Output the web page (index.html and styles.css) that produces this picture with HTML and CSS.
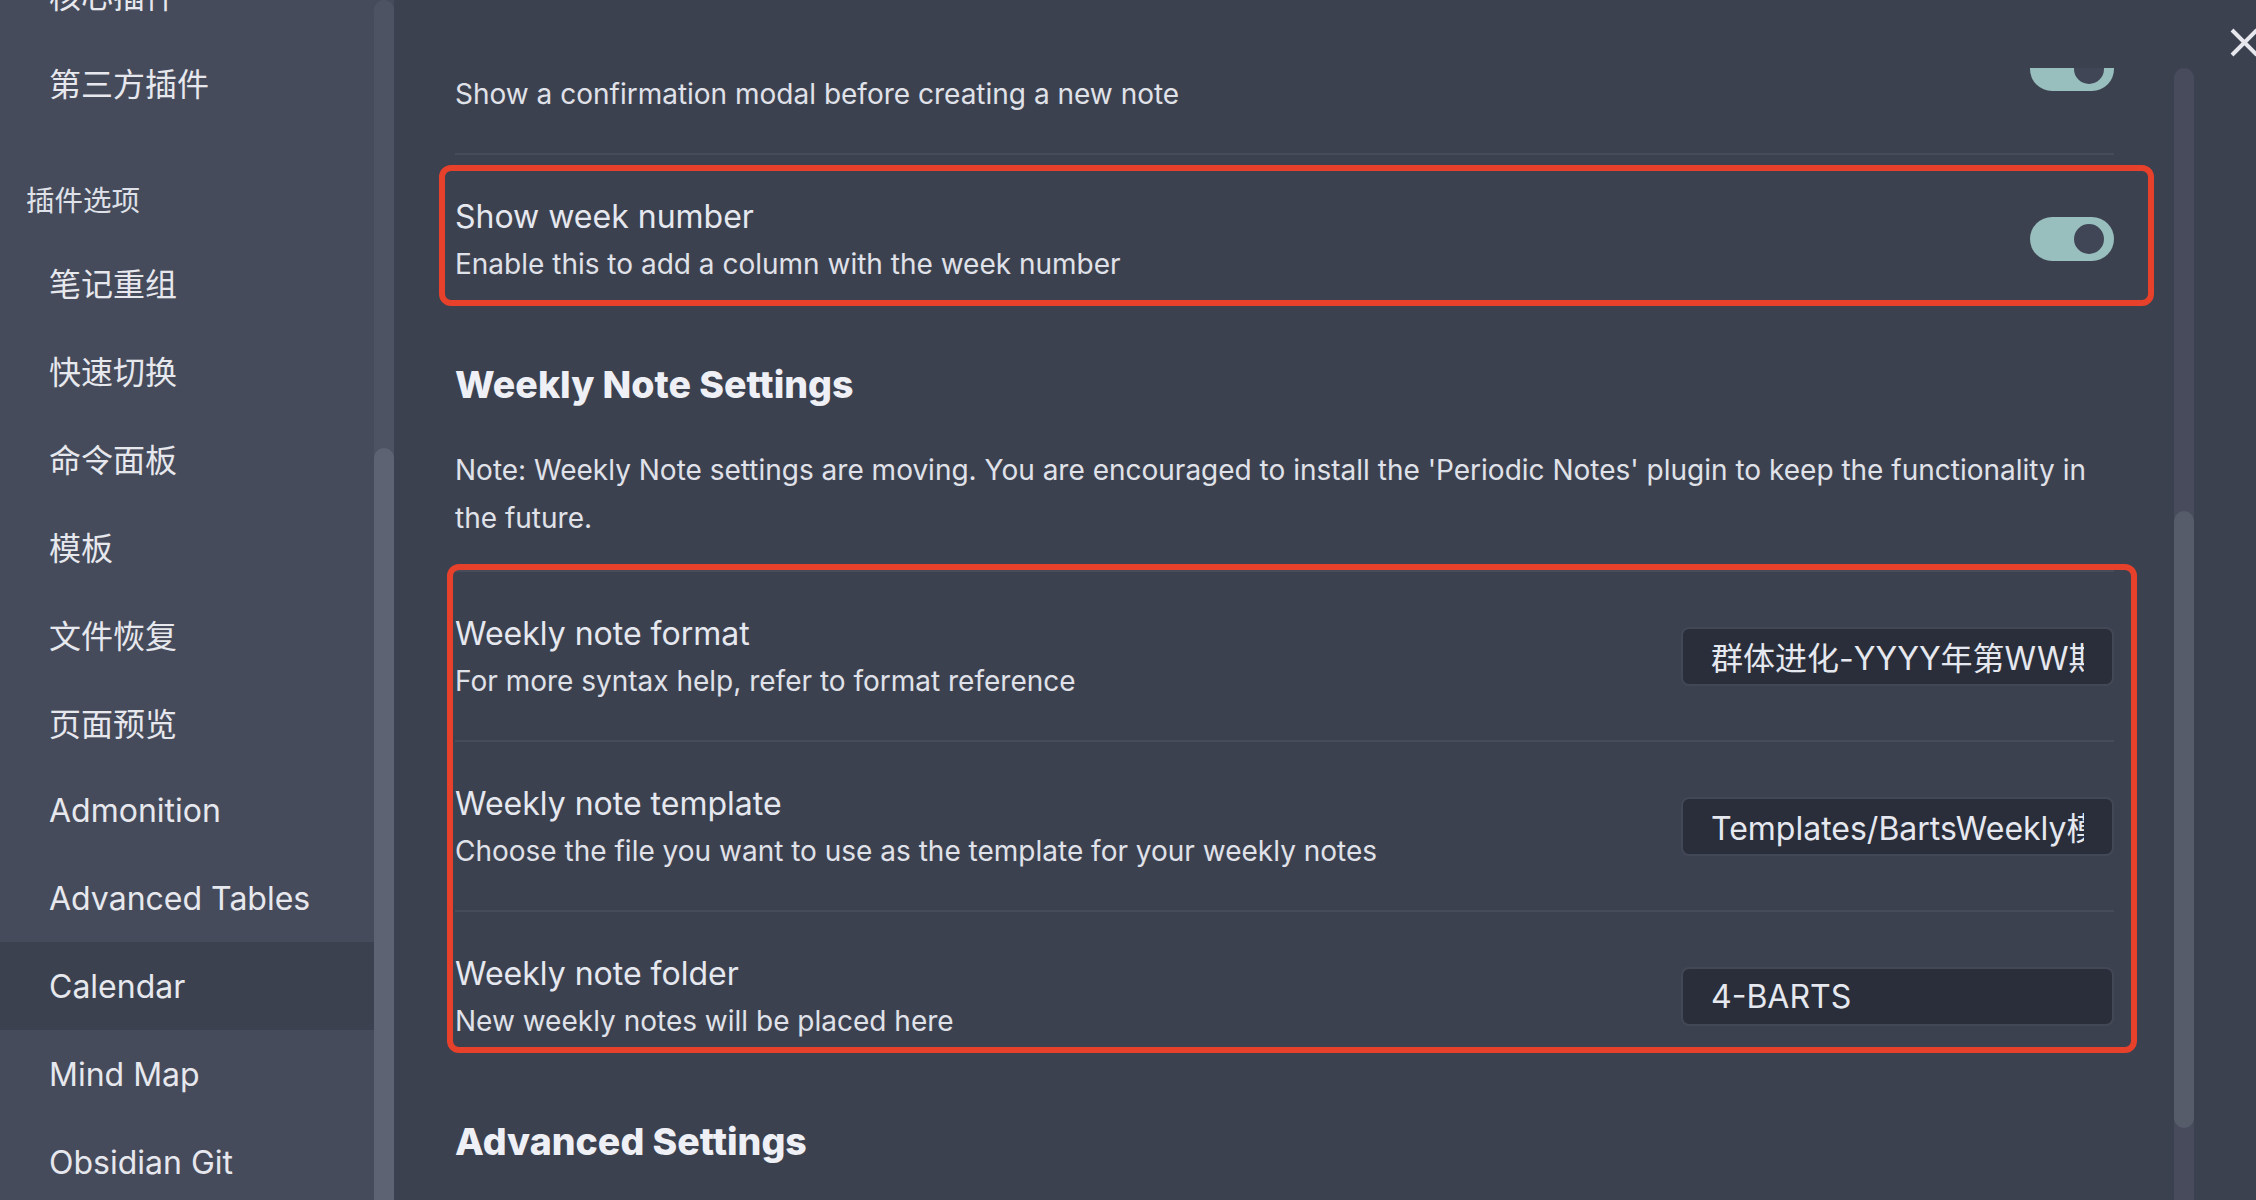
FILE: index.html
```html
<!DOCTYPE html>
<html lang="zh">
<head>
<meta charset="utf-8">
<title>Settings</title>
<link rel="stylesheet" href="styles.css">
</head>
<body>
<div class="modal">
  <aside class="sidebar">
    <div class="side-scroll">
      <nav class="side-list">
        <div class="tab">核心插件</div>
        <div class="tab">第三方插件</div>
        <div class="group-title">插件选项</div>
        <div class="tab">笔记重组</div>
        <div class="tab">快速切换</div>
        <div class="tab">命令面板</div>
        <div class="tab">模板</div>
        <div class="tab">文件恢复</div>
        <div class="tab">页面预览</div>
        <div class="tab">Admonition</div>
        <div class="tab">Advanced Tables</div>
        <div class="tab active">Calendar</div>
        <div class="tab">Mind Map</div>
        <div class="tab">Obsidian Git</div>
        <div class="tab">Periodic Notes</div>
      </nav>
    </div>
    <div class="side-track"><div class="side-thumb"></div></div>
  </aside>

  <main class="content-pane">
    <button class="close" aria-label="Close">
      <svg viewBox="0 0 29 29" width="29" height="29"><path d="M2 2L27 27M27 2L2 27" stroke="#e6e8ee" stroke-width="4" stroke-linecap="butt" fill="none"/></svg>
    </button>
    <div class="pane-body">
      <div class="scroll-view">
        <div class="settings">
          <div class="setting-item first">
            <div class="info">
              <div class="name">Confirm before creating new note</div>
              <div class="desc">Show a confirmation modal before creating a new note</div>
            </div>
            <div class="toggle"><span class="knob"></span></div>
          </div>

          <div class="setting-item marked-single">
            <div class="info">
              <div class="name">Show week number</div>
              <div class="desc">Enable this to add a column with the week number</div>
            </div>
            <div class="toggle"><span class="knob"></span></div>
          </div>

          <div class="heading">Weekly Note Settings</div>
          <p class="note">Note: Weekly Note settings are moving. You are encouraged to install the 'Periodic Notes' plugin to keep the functionality in the future.</p>

          <div class="marked-group">
            <div class="setting-item">
              <div class="info">
                <div class="name">Weekly note format</div>
                <div class="desc">For more syntax help, refer to format reference</div>
              </div>
              <input class="text-input" type="text" value="群体进化-YYYY年第WW期">
            </div>
            <div class="setting-item">
              <div class="info">
                <div class="name">Weekly note template</div>
                <div class="desc">Choose the file you want to use as the template for your weekly notes</div>
              </div>
              <input class="text-input" type="text" value="Templates/BartsWeekly模板">
            </div>
            <div class="setting-item">
              <div class="info">
                <div class="name">Weekly note folder</div>
                <div class="desc">New weekly notes will be placed here</div>
              </div>
              <input class="text-input" type="text" value="4-BARTS">
            </div>
          </div>

          <div class="heading">Advanced Settings</div>
        </div>
      </div>
      <div class="vtrack"><div class="vthumb"></div></div>
    </div>
  </main>
</div>
</body>
</html>
```

FILE: styles.css
```css
* { box-sizing: border-box; }
html, body { margin: 0; padding: 0; height: 100%; }
body {
  background: #3c4150;
  font-family: Inter, "Noto Sans CJK SC", sans-serif;
  color: #e4e6ed;
  overflow: hidden;
}
.modal { display: flex; width: 2256px; height: 1200px; }

/* sidebar */
.sidebar { width: 394px; flex-shrink: 0; display: flex; background: #464b5b; }
.side-scroll { width: 374px; overflow: hidden; }
.side-list { margin-top: -50px; }
.tab {
  height: 88px;
  padding-left: 49px;
  display: flex;
  align-items: center;
  font-size: 32px;
  color: #e6e8ee;
}
.tab.active { background: #3c4150; }
.group-title {
  padding: 56px 0 18px 26px;
  font-size: 28.5px;
  line-height: 38px;
  color: #dfe1e8;
}
.side-track { width: 20px; background: #4e5363; border-radius: 10px 10px 0 0; overflow: hidden; }
.side-thumb { margin-top: 448px; height: 900px; background: #5e6374; border-radius: 10px; }

/* content */
.content-pane {
  flex: 1;
  position: relative;
  display: flex;
  flex-direction: column;
  padding-top: 68px;
  background: #3c4150;
}
.close {
  position: absolute;
  top: 28px;
  right: -3px;
  width: 29px;
  height: 29px;
  padding: 0;
  border: 0;
  background: none;
}
.close svg { display: block; }
.pane-body { flex: 1; display: flex; min-height: 0; }
.scroll-view { flex: 1; overflow: hidden; padding: 0 60px 0 61px; }
.settings { margin-top: -83px; }
.vtrack { width: 20px; margin-right: 62px; background: #474b5b; border-radius: 10px 10px 0 0; overflow: hidden; }
.vthumb { margin-top: 443px; height: 617px; background: #575c6b; border-radius: 10px; }

.setting-item {
  display: flex;
  align-items: center;
  border-top: 2px solid #474c5b;
  padding: 38px 0;
}
.setting-item.first { border-top: 0; }
.info { flex: 1; min-width: 0; }
.name { font-size: 32px; line-height: 48px; color: #e6e8ef; }
.desc { font-size: 28px; line-height: 42px; padding-top: 2px; color: #e0e2e9; }

.toggle {
  width: 84px;
  height: 44px;
  border-radius: 22px;
  background: #98bebd;
  display: flex;
  align-items: center;
  justify-content: flex-end;
  padding-right: 10px;
  flex-shrink: 0;
}
.knob { width: 30px; height: 30px; border-radius: 50%; background: #414656; }

.text-input {
  width: 433px;
  height: 59px;
  flex-shrink: 0;
  background: #2a2e3a;
  border: 2px solid #434857;
  border-radius: 8px;
  padding: 0 28px;
  font-family: Inter, "Noto Sans CJK SC", sans-serif;
  font-size: 32px;
  color: #e6e8ef;
  outline: none;
}

.heading {
  padding: 38px 0;
  font-size: 37.5px;
  line-height: 47px;
  font-weight: 800;
  color: #eef0f5;
}
.note { margin: 0 0 28px; font-size: 28px; line-height: 48px; color: #e0e2e9; }

/* red annotation frames */
.marked-single, .marked-group { position: relative; }
.marked-single::after, .marked-group::after {
  content: "";
  position: absolute;
  border: 6px solid #e8412b;
  border-radius: 12px;
  pointer-events: none;
}
.marked-single::after { top: 10px; bottom: 17px; left: -16px; right: -40px; }
.marked-group::after { top: -6px; bottom: 27px; left: -8px; right: -23px; }
```
